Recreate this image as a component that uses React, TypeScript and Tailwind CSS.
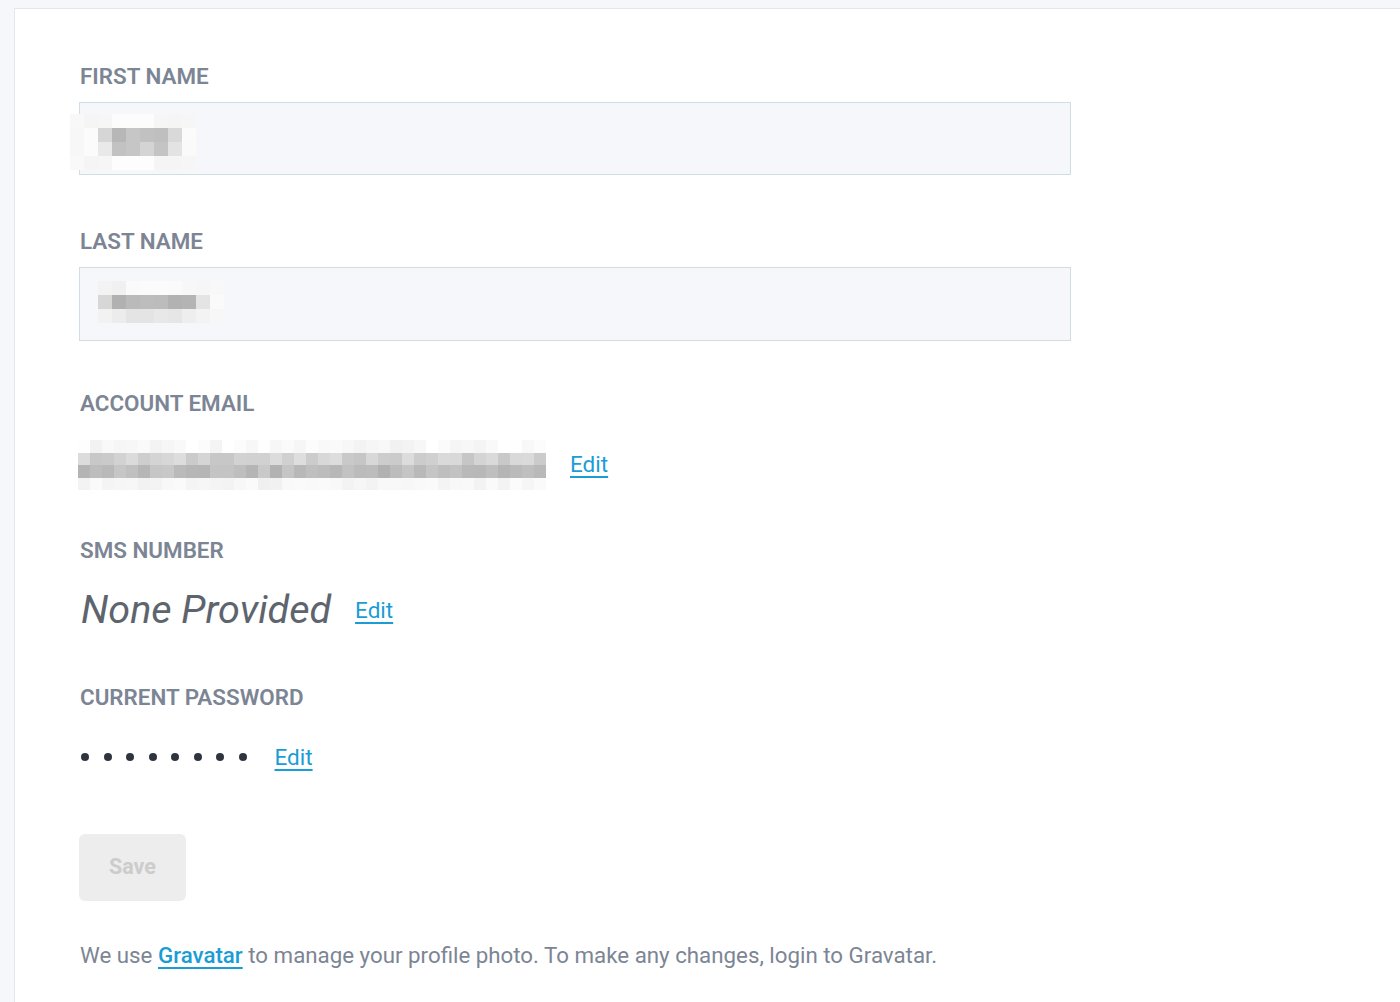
import React from 'react';

// ── Pixelated (redacted) blocks ─────────────────────────────────────
type Grid = string[][];

function Mosaic({ grid, cell, cellH }: { grid: Grid; cell: number; cellH?: number }) {
  const h = cellH ?? cell;
  return (
    <div className="flex flex-col">
      {grid.map((row, r) => (
        <div key={r} className="flex">
          {row.map((c, i) => (
            <div key={i} style={{ width: cell, height: h, backgroundColor: `#${c}${c}${c}` }} />
          ))}
        </div>
      ))}
    </div>
  );
}

const firstNameGrid: Grid = [
  ['f8', 'f5', 'f6', 'fc', 'fc', 'fc', 'f6', 'f5', 'f6'],
  ['f7', 'fb', 'd6', 'b7', 'c6', 'c1', 'bf', 'd9', 'fb'],
  ['f7', 'fb', 'e9', 'c2', 'c6', 'd4', 'c4', 'e3', 'fa'],
  ['f9', 'f5', 'f6', 'fd', 'fd', 'fd', 'f5', 'f5', 'f6'],
];

const lastNameGrid: Grid = [
  ['f3', 'f0', 'fa', 'fb', 'fb', 'fa', 'f7', 'f6', 'f8'],
  ['d7', 'b1', 'ba', 'bd', 'bc', 'b2', 'b4', 'e4', 'fa'],
  ['f2', 'ec', 'e4', 'e4', 'e8', 'e6', 'ee', 'f3', 'f7'],
];

// deterministic "random" shades for the email mosaic
function shade(seed: number, base: number, spread: number) {
  const x = Math.sin(seed * 12.9898) * 43758.5453;
  const f = x - Math.floor(x);
  const v = Math.round(base + (f - 0.5) * spread);
  return Math.max(0, Math.min(255, v)).toString(16).padStart(2, '0');
}

const emailGrid: Grid = [
  Array.from({ length: 39 }, (_, i) => shade(i + 1, 248, 14)),
  Array.from({ length: 39 }, (_, i) => shade(i + 101, 210, 24)),
  Array.from({ length: 39 }, (_, i) => shade(i + 201, 188, 26)),
  Array.from({ length: 39 }, (_, i) => shade(i + 301, 245, 12)),
];

// ── Pieces ─────────────────────────────────────────────────────────
function Label({ children, className = '' }: { children: React.ReactNode; className?: string }) {
  return (
    <div className={`text-[22.4px] leading-[26px] font-semibold uppercase text-[#7c8594] ${className}`}>
      {children}
    </div>
  );
}

function EditLink({ className = '' }: { className?: string }) {
  return (
    <a
      href="#"
      className={`text-[22.5px] leading-[28px] text-[#1a9dd5] underline decoration-2 underline-offset-[4px] ${className}`}
    >
      Edit
    </a>
  );
}

// ── Page ───────────────────────────────────────────────────────────
export default function App() {
  return (
    <div
      className="min-h-screen bg-[#f5f7fa] pl-[14px] pt-[8px]"
      style={{ fontFamily: 'Roboto, "Liberation Sans", sans-serif' }}
    >
      <div className="min-h-[994px] bg-white border-l border-t border-[#e2e7ed] pl-[64px] pt-[54px]">
        <Label className="ml-[1px]">First Name</Label>
        <div className="mt-[13px] w-[992px] h-[73px] bg-[#f5f7fa] border border-[#cfdee3] flex items-center overflow-visible">
          <div className="-ml-[10px] mt-[6px]">
            <Mosaic grid={firstNameGrid} cell={14} />
          </div>
        </div>

        <Label className="mt-[53px] ml-[1px]">Last Name</Label>
        <div className="mt-[13px] w-[992px] h-[74px] bg-[#f5f7fa] border border-[#cfdee3] flex items-center">
          <div className="ml-[18px] -mt-[4px]">
            <Mosaic grid={lastNameGrid} cell={14} />
          </div>
        </div>

        <Label className="mt-[49px] ml-[1px]">Account Email</Label>
        <div className="mt-[24px] flex items-center h-[50px]">
          <div className="-ml-[1px]">
            <Mosaic grid={emailGrid} cell={12} cellH={12.5} />
          </div>
          <EditLink className="ml-[24px] -mt-[2px]" />
        </div>

        <Label className="mt-[47px] ml-[1px]">SMS Number</Label>
        <div className="mt-[25px] flex items-center h-[44px]">
          <span className="text-[39.5px] leading-[44px] italic text-[#5d646e] ml-[2px]">None Provided</span>
          <EditLink className="ml-[24px]" />
        </div>

        <Label className="mt-[52px] ml-[1px]">Current Password</Label>
        <div className="mt-[32px] flex items-center h-[30px]">
          <div className="flex items-center gap-[14.5px] ml-[2px]">
            {Array.from({ length: 8 }).map((_, i) => (
              <span key={i} className="w-[8px] h-[8px] rounded-full bg-[#2f3540]" />
            ))}
          </div>
          <EditLink className="ml-[28px]" />
        </div>

        <button
          disabled
          className="mt-[62px] w-[107px] h-[67px] rounded-[6px] bg-[#ededed] text-[21.5px] font-bold text-[#cccccc] block"
        >
          Save
        </button>

        <p className="mt-[39px] ml-[1px] text-[22.3px] leading-[30px] text-[#7c8594]">
          We use{' '}
          <a href="#" className="font-medium text-[#1a9dd5] underline decoration-2 underline-offset-[4px]">
            Gravatar
          </a>{' '}
          to manage your profile photo. To make any changes, login to Gravatar.
        </p>
      </div>
    </div>
  );
}
